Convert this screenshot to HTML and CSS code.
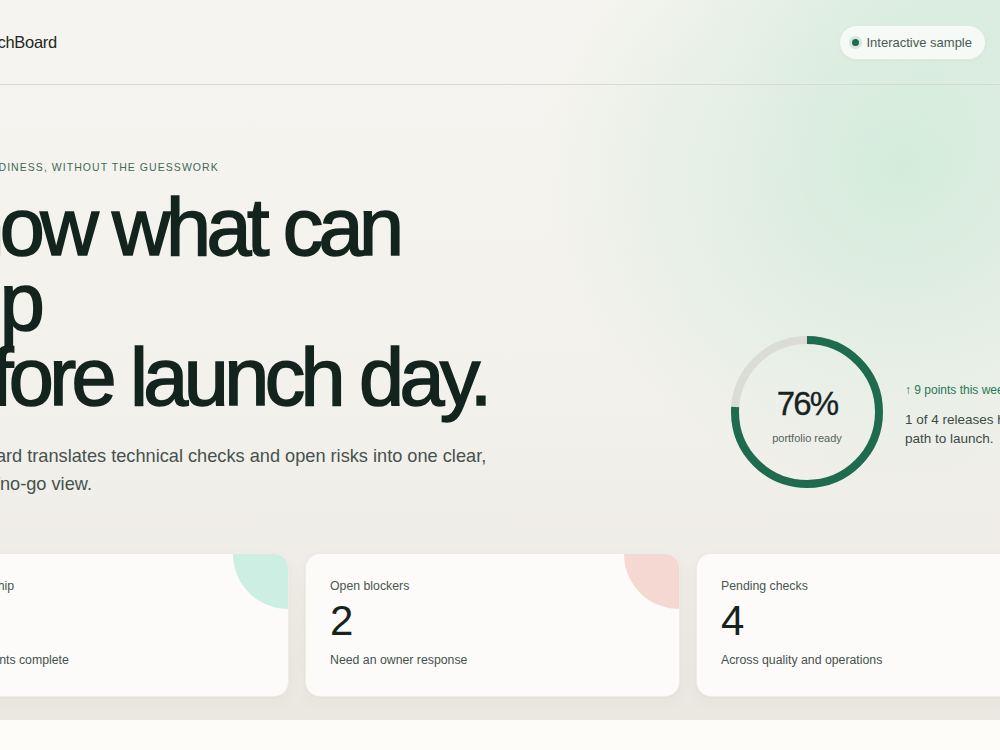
FILE: index.html
```html
<!DOCTYPE html>
<html lang="en">
<head>
<meta charset="utf-8">
<title>LaunchBoard</title>
<link rel="stylesheet" href="styles.css">
</head>
<body>
<div class="hero-bg">
  <header class="topbar">
    <div class="topbar-inner">
      <div class="brand">
        <span class="brand-mark"></span>
        <span class="brand-name">LaunchBoard</span>
      </div>
      <div class="pill"><span class="pill-dot"></span>Interactive sample</div>
    </div>
  </header>

  <main class="page">
    <section class="hero">
      <div class="hero-copy">
        <p class="eyebrow">Release readiness, without the guesswork</p>
        <h1 class="headline">Know what can ship<br>before launch day.</h1>
        <p class="lede">LaunchBoard translates technical checks and open risks into one clear, shared go/no-go view.</p>
      </div>
      <div class="score">
        <div class="ring">
          <svg class="ring-svg" width="152" height="152" viewBox="0 0 152 152">
            <circle class="ring-track" cx="76" cy="76" r="72"></circle>
            <circle class="ring-fill" cx="76" cy="76" r="72" style="stroke-dasharray: 343.8 452.4"></circle>
          </svg>
          <div class="ring-label">
            <span class="ring-value">76%</span>
            <span class="ring-caption">portfolio ready</span>
          </div>
        </div>
        <div class="score-text">
          <p class="trend">&#8593; 9 points this week</p>
          <p class="score-note">1 of 4 releases has a clear path to launch.</p>
        </div>
      </div>
    </section>

    <section class="stats">
      <div class="card">
        <span class="blob blob-mint"></span>
        <p class="card-label">Ready to ship</p>
        <p class="card-number">1</p>
        <p class="card-desc">Requirements complete</p>
      </div>
      <div class="card">
        <span class="blob blob-pink"></span>
        <p class="card-label">Open blockers</p>
        <p class="card-number">2</p>
        <p class="card-desc">Need an owner response</p>
      </div>
      <div class="card">
        <span class="blob blob-sand"></span>
        <p class="card-label">Pending checks</p>
        <p class="card-number">4</p>
        <p class="card-desc">Across quality and operations</p>
      </div>
    </section>
  </main>
</div>
<div class="below"></div>
</body>
</html>
```

FILE: styles.css
```css
* { box-sizing: border-box; }

html, body {
  margin: 0;
  padding: 0;
}

body {
  font-family: "Liberation Sans", Arial, sans-serif;
  color: #1a2622;
  background: #fdfcf9;
  overflow: hidden;
}

p { margin: 0; }

.hero-bg {
  background:
    radial-gradient(ellipse 360px 330px at 900px 170px, rgba(206, 234, 216, 0.85), rgba(206, 234, 216, 0) 100%),
    radial-gradient(ellipse 300px 200px at 1000px 0px, rgba(214, 236, 222, 0.7), rgba(214, 236, 222, 0) 100%),
    linear-gradient(180deg, #f6f4f0 0%, #f3f1ec 55%, #ebe8e1 100%);
  padding-bottom: 23px;
}

/* Header */
.topbar {
  border-bottom: 1px solid #d9d8d1;
  height: 85px;
}

.topbar-inner {
  margin-left: -86px;
  width: 1072px;
  height: 84px;
  display: flex;
  align-items: center;
  justify-content: space-between;
  padding-top: 1px;
}

.brand {
  display: flex;
  align-items: center;
  gap: 16px;
}

.brand-mark {
  width: 32px;
  height: 32px;
  border-radius: 9px;
  background: #1e6b50;
}

.brand-name {
  font-size: 16.5px;
  color: #1b2824;
  letter-spacing: -0.3px;
}

.pill {
  display: flex;
  align-items: center;
  gap: 8px;
  height: 35px;
  padding: 0 13px 0 12px;
  border-radius: 18px;
  background: rgba(255, 255, 255, 0.72);
  border: 1px solid rgba(220, 228, 222, 0.9);
  font-size: 13px;
  color: #4b5954;
  box-shadow: 0 1px 3px rgba(0, 0, 0, 0.03);
}

.pill-dot {
  width: 7px;
  height: 7px;
  border-radius: 50%;
  background: #1e6b50;
  box-shadow: 0 0 0 3px rgba(30, 107, 80, 0.14);
}

/* Page container */
.page {
  margin-left: -86px;
  width: 1157px;
}

.hero {
  display: flex;
  align-items: flex-end;
  justify-content: space-between;
  padding-top: 75px;
}

.hero-copy {
  width: 600px;
}

.eyebrow {
  font-size: 10.5px;
  line-height: 14px;
  letter-spacing: 1.05px;
  text-transform: uppercase;
  color: #3e6a59;
  margin-bottom: 16px;
}

.headline {
  margin: 0 0 0 -4px;
  font-size: 81px;
  line-height: 75px;
  font-weight: 400;
  letter-spacing: -4.6px;
  color: #13241f;
  -webkit-text-stroke: 1.6px #13241f;
}

.lede {
  margin-top: 27px;
  font-size: 18.2px;
  line-height: 28px;
  color: #45524d;
  width: 590px;
}

/* Score */
.score {
  display: flex;
  align-items: center;
  gap: 22px;
  margin-bottom: 10px;
}

.ring {
  position: relative;
  width: 152px;
  height: 152px;
}

.ring-svg {
  display: block;
  transform: rotate(-90deg);
}

.ring-track {
  fill: none;
  stroke: #dbdcd5;
  stroke-width: 8;
}

.ring-fill {
  fill: none;
  stroke: #1e6b50;
  stroke-width: 8;
}

.ring-label {
  position: absolute;
  inset: 0;
  display: flex;
  flex-direction: column;
  align-items: center;
  justify-content: center;
  padding-top: 6px;
}

.ring-value {
  font-size: 33px;
  line-height: 36px;
  letter-spacing: -1.8px;
  color: #17231f;
  -webkit-text-stroke: 0.3px #17231f;
}

.ring-caption {
  margin-top: 10px;
  font-size: 11px;
  color: #55625d;
}

.score-text {
  width: 166px;
  padding-top: 6px;
}

.trend {
  font-size: 12px;
  color: #2d7758;
  margin-bottom: 13px;
}

.score-note {
  font-size: 13.5px;
  line-height: 19px;
  color: #3c4a45;
}

/* Stats */
.stats {
  display: grid;
  grid-template-columns: repeat(3, 375px);
  gap: 16px;
  margin-top: 55px;
}

.card {
  position: relative;
  overflow: hidden;
  height: 144px;
  padding: 23px 24px 0;
  background: #fcfbf9;
  border-radius: 15px;
  border: 1px solid rgba(230, 226, 218, 0.6);
  box-shadow: 0 1px 2px rgba(60, 50, 30, 0.03), 0 6px 18px rgba(60, 50, 30, 0.03);
}

.blob {
  position: absolute;
  top: -55px;
  right: -55px;
  width: 110px;
  height: 110px;
  border-radius: 50%;
}

.blob-mint { background: #cdeee2; }
.blob-pink { background: #f6d8d3; }
.blob-sand { background: #f2e8cc; }

.card-label {
  font-size: 12.3px;
  line-height: 18px;
  color: #4a5651;
}

.card-number {
  margin-top: 4px;
  font-size: 42px;
  line-height: 44px;
  color: #17231f;
}

.card-desc {
  margin-top: 8px;
  font-size: 12.3px;
  line-height: 18px;
  color: #45524d;
}

.below {
  height: 40px;
  background: #fdfcf9;
}
```
